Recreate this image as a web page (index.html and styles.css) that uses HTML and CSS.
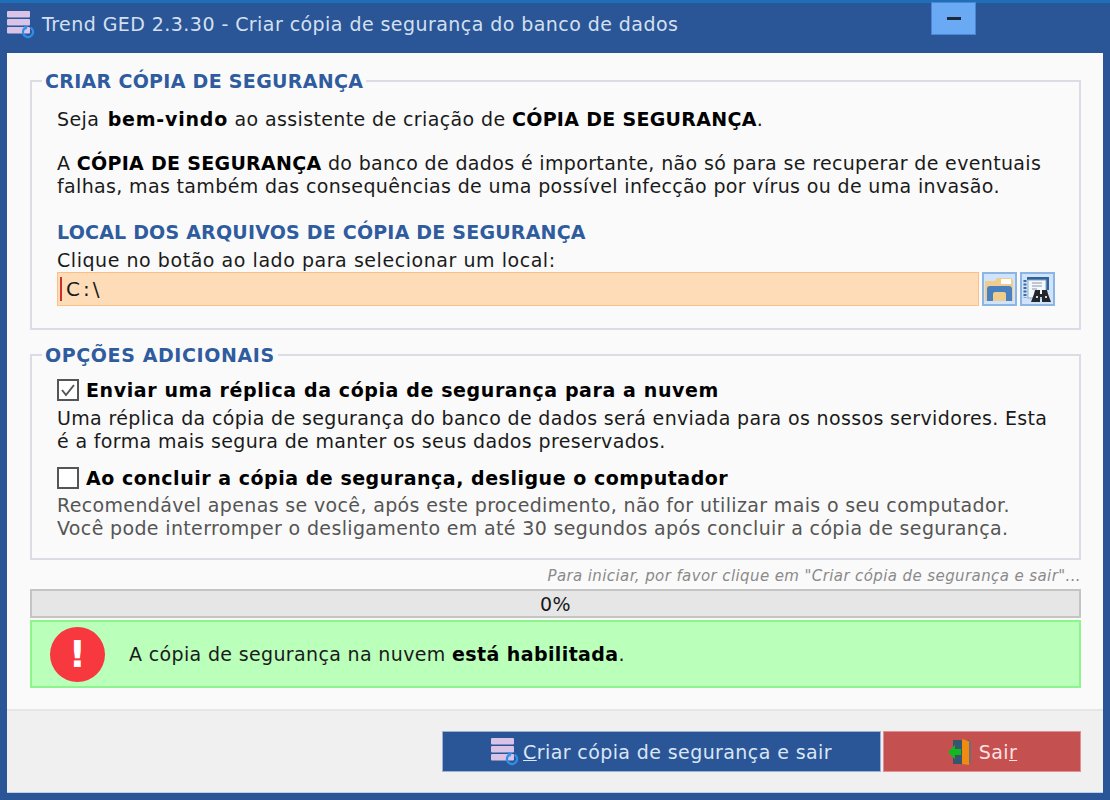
FILE: index.html
```html
<!DOCTYPE html>
<html lang="pt-BR">
<head>
<meta charset="utf-8">
<title>Trend GED</title>
<link rel="stylesheet" href="styles.css">
</head>
<body>
<svg width="0" height="0" class="defs">
  <symbol id="db" viewBox="0 0 28 28">
    <rect x="0" y="0" width="23" height="6.5" rx="1" fill="#d9c3e6"/>
    <rect x="0" y="8" width="23" height="6.5" rx="1" fill="#d9c3e6"/>
    <rect x="0" y="16" width="23" height="6.5" rx="1" fill="#d9c3e6"/>
    <circle cx="21" cy="21" r="5" fill="none" stroke="#2f8fe8" stroke-width="2.4" stroke-dasharray="25 6" transform="rotate(-60 21 21)"/>
    <path d="M16 14l5 1-2 4z" fill="#2f8fe8"/>
  </symbol>
</svg>
<div class="window">
  <header class="titlebar">
    <svg class="title-icon"><use href="#db"/></svg>
    <span class="title-text">Trend GED 2.3.30 - Criar cópia de segurança do banco de dados</span>
    <button class="min-btn" aria-label="Minimizar"><span class="min-bar"></span></button>
  </header>
  <main class="client">
    <div class="body">
      <fieldset class="group group-backup">
        <legend>CRIAR CÓPIA DE SEGURANÇA</legend>
        <p class="welcome">Seja <b class="kw">bem-vindo</b> ao assistente de criação de <b>CÓPIA DE SEGURANÇA</b>.</p>
        <p class="intro">A <b>CÓPIA DE SEGURANÇA</b> do banco de dados é importante, não só para se recuperar de eventuais falhas, mas também das consequências de uma possível infecção por vírus ou de uma invasão.</p>
        <h2 class="subhead">LOCAL DOS ARQUIVOS DE CÓPIA DE SEGURANÇA</h2>
        <p class="pick">Clique no botão ao lado para selecionar um local:</p>
        <div class="path-row">
          <div class="path-input"><span class="caret"></span>C:\</div>
          <button class="icon-btn" aria-label="Selecionar pasta">
            <svg width="31" height="28" viewBox="0 0 31 28">
              <path d="M1 26V6h10l2-3h15l1 3v20z" fill="#f0cd8c"/>
              <path d="M17 4h10v5H17z" fill="#fff"/>
              <path d="M3 26V14q0-3 3-3h19q3 0 3 3v12h-6v-7q0-2-2-2h-9q-2 0-2 2v7z" fill="#4a80bd"/>
              <rect x="12" y="22" width="7" height="4" fill="#f0cd8c"/>
            </svg>
          </button>
          <button class="icon-btn" aria-label="Localizar">
            <svg width="31" height="28" viewBox="0 0 31 28">
              <path d="M5 2h22v13h-3V5H5z" fill="#2f6296"/>
              <rect x="6" y="5" width="18" height="18" fill="#f4f8fc" stroke="#8fa9c6"/>
              <path d="M10 8h10M10 11h10M10 14h5" stroke="#8a98a8" stroke-width="1.2"/>
              <path d="M3 5v18" stroke="#3a6aa0" stroke-width="3" stroke-dasharray="2 1.5"/>
              <path d="M13 15h5v4h2v-4h5l1 4 3 8h-9v-5h-2v5h-9l3-8z" fill="#23262b"/>
              <path d="M14 22h2M23 22h2" stroke="#cfd6de" stroke-width="2"/>
            </svg>
          </button>
        </div>
      </fieldset>
      <fieldset class="group group-options">
        <legend>OPÇÕES ADICIONAIS</legend>
        <div class="check-row">
          <span class="check"><svg width="18" height="18" viewBox="0 0 18 18"><path d="M3 9l4 5 8-10" fill="none" stroke="#555" stroke-width="2"/></svg></span>
          <b>Enviar uma réplica da cópia de segurança para a nuvem</b>
        </div>
        <p class="desc">Uma réplica da cópia de segurança do banco de dados será enviada para os nossos servidores. Esta é a forma mais segura de manter os seus dados preservados.</p>
        <div class="check-row check-row-2">
          <span class="check"></span>
          <b>Ao concluir a cópia de segurança, desligue o computador</b>
        </div>
        <p class="desc desc-muted">Recomendável apenas se você, após este procedimento, não for utilizar mais o seu computador. Você pode interromper o desligamento em até 30 segundos após concluir a cópia de segurança.</p>
      </fieldset>
      <p class="hint">Para iniciar, por favor clique em "Criar cópia de segurança e sair"...</p>
      <div class="progress">0%</div>
      <div class="notice">
        <span class="alert-icon">!</span>
        <span class="notice-text">A cópia de segurança na nuvem <b>está habilitada</b>.</span>
      </div>
    </div>
    <footer class="actions">
      <button class="btn btn-primary"><svg class="btn-icon"><use href="#db"/></svg><span><u>C</u>riar cópia de segurança e sair</span></button>
      <button class="btn btn-exit">
        <svg class="btn-icon" viewBox="0 0 28 28">
          <rect x="6" y="2" width="16" height="24" fill="#35566f"/>
          <path d="M15 1l7 2v24l-7-1z" fill="#f08a10"/>
          <rect x="22" y="3" width="2" height="22" fill="#6d6f78"/>
          <path d="M1 14l7-7v4h6v6H8v4z" fill="#12b81e"/>
        </svg><span>Sai<u>r</u></span>
      </button>
    </footer>
  </main>
</div>
</body>
</html>
```

FILE: styles.css
```css
* { box-sizing: border-box; }
html, body { margin: 0; height: 100%; }
body { font-family: "DejaVu Sans", Verdana, sans-serif; font-size: 19px; letter-spacing: .35px; color: #1a1a1a; overflow: hidden; }
b { color: #000; }
.defs { position: absolute; }
p { margin: 0; }
.window {
  width: 1110px; height: 800px; background: #2a5597;
  border-top: 3px solid #1f6fb8;
  padding: 0 7px 7px;
  display: flex; flex-direction: column;
}
.titlebar { height: 50px; flex: none; display: flex; align-items: flex-start; color: #d4e0f0; position: relative; }
.title-icon { width: 28px; height: 28px; margin-top: 8px; flex: none; }
.title-text { margin: 10px 0 0 7px; line-height: 22px; letter-spacing: .44px; }
.min-btn {
  position: absolute; left: 924px; top: -1px; width: 45px; height: 33px;
  background: #6aaaf5; border: 1px solid #4a86d4; padding: 0;
  display: flex; align-items: center; justify-content: center;
}
.min-bar { width: 14px; height: 3px; background: #1c2a3c; }
.client { flex: 1; background: #fafafa; display: flex; flex-direction: column; min-height: 0; border-bottom: 1px solid #bcd0e8; }
.body { flex: 1; padding: 17px 22px 0 23px; }
.group { margin: 0; border: 2px solid #dcdce6; padding: 0 24px 0 25px; min-width: 0; }
.group legend { color: #2f5c9e; font-weight: bold; padding: 0 3px; margin-left: -15px; line-height: 22px; font-size: 19px; letter-spacing: .3px; }
.group-backup { height: 260px; }
.group-options { height: 216px; margin-top: 14px; }
.group-options legend { letter-spacing: .6px; }
.welcome { line-height: 24px; margin-top: 15px; letter-spacing: .38px; }
.welcome b, .intro b { letter-spacing: .3px; }
.welcome .kw { letter-spacing: .8px; margin-left: 2px; }
.intro { line-height: 23px; margin-top: 21px; }
.subhead { margin: 23px 0 0; font-size: 19px; line-height: 23px; color: #2f5c9e; font-weight: bold; letter-spacing: .2px; }
.pick { line-height: 24px; margin-top: 4px; letter-spacing: .55px; }
.path-row { display: flex; gap: 3px; margin-top: 0; height: 34px; }
.path-input { flex: 1; background: #ffdcb8; border: 1px solid #fac088; display: flex; align-items: center; padding-left: 2px; font-size: 20px; letter-spacing: 3px; }
.caret { width: 2px; height: 24px; background: #c9302c; margin-right: 4px; }
.icon-btn { width: 35px; height: 34px; padding: 0; background: #cfe3fa; border: 2px solid #8db5e4; display: flex; align-items: center; justify-content: center; flex: none; }
.check-row { display: flex; align-items: center; gap: 7px; margin-top: 12px; line-height: 24px; height: 24px; letter-spacing: .6px; }
.check-row-2 { margin-top: 13px; letter-spacing: .52px; }
.check { width: 22px; height: 22px; border: 2px solid #555; background: #fff; display: flex; align-items: center; justify-content: center; flex: none; }
.desc { line-height: 23px; margin-top: 5px; }
.desc-muted { color: #555; margin-top: 4px; }
.hint { text-align: right; font-style: italic; font-size: 15px; letter-spacing: .4px; color: #8a8a8a; line-height: 20px; margin-top: 6px; }
.progress { height: 29px; margin-top: 3px; background: #e6e6e6; border: 2px solid #c4c4c4; text-align: center; line-height: 26px; }
.notice { height: 68px; margin-top: 2px; background: #baffba; border: 2px solid #8cf58c; display: flex; align-items: center; gap: 24px; padding-left: 18px; }
.notice-text b { letter-spacing: .4px; }
.alert-icon { width: 55px; height: 55px; border-radius: 50%; background: #f7383f; color: #fff; font-weight: bold; font-size: 38px; display: flex; align-items: center; justify-content: center; flex: none; }
.actions { height: 83px; flex: none; background: #f0f0f0; border-top: 2px solid #e6e6e6; display: flex; justify-content: flex-end; gap: 2px; padding: 20px 22px 0 0; }
.btn { height: 41px; border: 1px solid #9ab4d6; display: flex; align-items: center; justify-content: center; font: inherit; letter-spacing: .4px; padding: 0; gap: 4px; }
.btn-primary { width: 439px; background: #2a5597; color: #dbe6f5; }
.btn-exit { width: 198px; background: #c55050; color: #ffe0e0; border-color: #e09090; }
.btn-icon { width: 28px; height: 28px; flex: none; }
```
